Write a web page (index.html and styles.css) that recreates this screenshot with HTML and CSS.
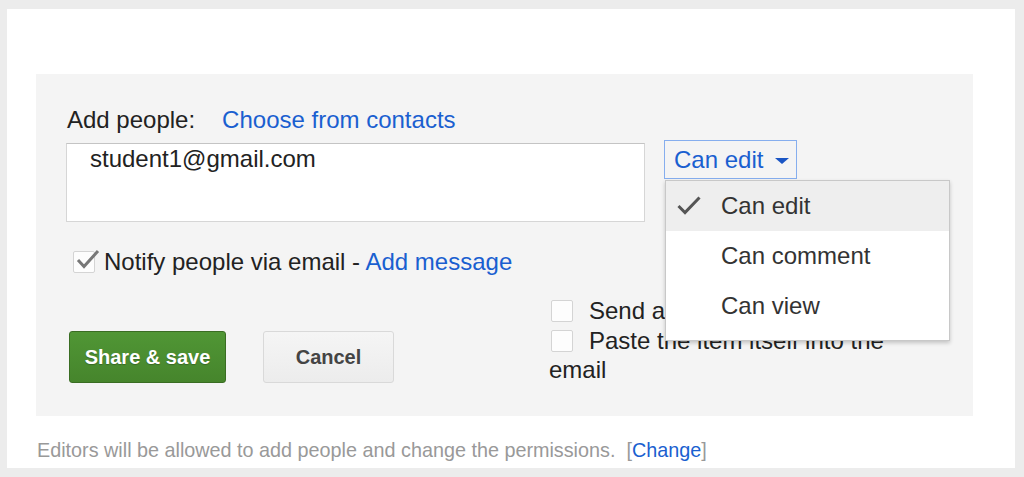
FILE: index.html
```html
<!DOCTYPE html>
<html>
<head>
<meta charset="utf-8">
<link rel="stylesheet" href="styles.css">
</head>
<body>
<div class="frame">
  <div class="panel">
    <div class="row-label">
      <span class="label">Add people:</span>
      <a class="link choose">Choose from contacts</a>
    </div>
    <div class="row-input">
      <div class="people-box">student1@gmail.com</div>
      <div class="perm">
        <div class="perm-btn">Can edit <span class="caret"></span></div>
        <div class="menu">
          <div class="menu-item selected">
            <svg class="tick" width="24" height="20" viewBox="0 0 24 20"><polyline points="1.5,10 8,16.5 22.5,1.5" fill="none" stroke="#555" stroke-width="3"/></svg>
            Can edit
          </div>
          <div class="menu-item">Can comment</div>
          <div class="menu-item">Can view</div>
        </div>
      </div>
    </div>
    <div class="row-notify">
      <span class="cbox checked">
        <svg width="26" height="22" viewBox="0 0 26 22"><polyline points="3,11 9,17.5 23,2" fill="none" stroke="#777" stroke-width="3"/></svg>
      </span>
      <span class="notify-text">Notify people via email - <a class="link">Add message</a></span>
    </div>
    <div class="row-bottom">
      <div class="buttons">
        <button class="btn btn-green">Share &amp; save</button>
        <button class="btn btn-cancel">Cancel</button>
      </div>
      <div class="options">
        <div class="opt"><span class="cbox"></span>Send a copy to myself</div>
        <div class="opt"><span class="cbox"></span>Paste the item itself into the email</div>
      </div>
    </div>
  </div>
  <div class="footer">Editors will be allowed to add people and change the permissions. &nbsp;[<a class="link">Change</a>]</div>
</div>
</body>
</html>
```

FILE: styles.css
```css
html, body {
  margin: 0;
  padding: 0;
  background: #ececec;
}
body {
  font-family: "Liberation Sans", Arial, sans-serif;
  color: #222;
}
.frame {
  width: 1024px;
  height: 477px;
  box-sizing: border-box;
  border-style: solid;
  border-color: #ececec;
  border-width: 9px 9px 9px 7px;
  background: #fff;
  padding: 65px 0 0 29px;
}
.panel {
  width: 937px;
  height: 342px;
  box-sizing: border-box;
  background: #f4f4f4;
  padding: 32px 0 0 30px;
  font-size: 24px;
  line-height: 28px;
}
.link {
  color: #1a5fd0;
  text-decoration: none;
}
.row-label {
  display: flex;
  height: 28px;
}
.label {
  margin-left: 1px;
}
.choose {
  margin-left: 27px;
}
.row-input {
  display: flex;
  align-items: flex-start;
  margin-top: 6px;
}
.people-box {
  width: 579px;
  height: 79px;
  box-sizing: border-box;
  margin-top: 3px;
  background: #fff;
  border: 1px solid #d6d6d6;
  border-top-color: #c4c4c4;
  padding: 1px 0 0 23px;
  color: #222;
}
.perm {
  position: relative;
  margin-left: 19px;
}
.perm-btn {
  width: 133px;
  height: 39px;
  box-sizing: border-box;
  border: 1px solid #86aeee;
  display: flex;
  align-items: center;
  padding-left: 9px;
  color: #1a5fd0;
}
.caret {
  width: 0;
  height: 0;
  margin-left: 12px;
  margin-top: 2px;
  border-left: 7px solid transparent;
  border-right: 7px solid transparent;
  border-top: 6px solid #1a55c4;
}
.menu {
  position: absolute;
  left: 1px;
  top: 40px;
  width: 285px;
  box-sizing: border-box;
  background: #fff;
  border: 1px solid #c8c8c8;
  box-shadow: 0 2px 4px rgba(0,0,0,0.2);
  padding: 0 0 9px;
  z-index: 10;
  color: #333;
}
.menu-item {
  position: relative;
  height: 50px;
  box-sizing: border-box;
  line-height: 49px;
  padding-left: 55px;
}
.menu-item.selected {
  background: #eeeeee;
}
.tick {
  position: absolute;
  left: 11px;
  top: 15px;
}
.row-notify {
  display: flex;
  align-items: center;
  margin-top: 26px;
  height: 28px;
}
.cbox {
  position: relative;
  display: inline-block;
  width: 22px;
  height: 22px;
  box-sizing: border-box;
  border: 1px solid #d4d4d4;
  border-radius: 2px;
  background: #fdfdfd;
}
.row-notify .cbox {
  margin-left: 7px;
  margin-right: 9px;
}
.cbox svg {
  position: absolute;
  left: 1px;
  top: -3px;
}
.row-bottom {
  display: flex;
  align-items: flex-start;
  margin-top: 20px;
}
.buttons {
  display: flex;
  margin-top: 35px;
  margin-left: 3px;
  gap: 37px;
}
.btn {
  height: 52px;
  box-sizing: border-box;
  font-family: "Liberation Sans", Arial, sans-serif;
  font-size: 20px;
  font-weight: bold;
  border-radius: 3px;
  padding: 0;
}
.btn-green {
  width: 157px;
  color: #fff;
  background: linear-gradient(#509635, #46852c);
  border: 1px solid #3a6d23;
  text-shadow: 0 1px 1px rgba(0,0,0,0.25);
}
.btn-cancel {
  width: 131px;
  color: #444;
  background: linear-gradient(#f5f5f5, #ececec);
  border: 1px solid #d9d9d9;
}
.options {
  width: 360px;
  margin-left: 155px;
  line-height: 29.5px;
  color: #222;
}
.opt .cbox {
  vertical-align: -3px;
  margin-left: 2px;
  margin-right: 16px;
}
.footer {
  margin-top: 22px;
  margin-left: 1px;
  font-size: 19.8px;
  line-height: 24px;
  color: #999;
}
```
